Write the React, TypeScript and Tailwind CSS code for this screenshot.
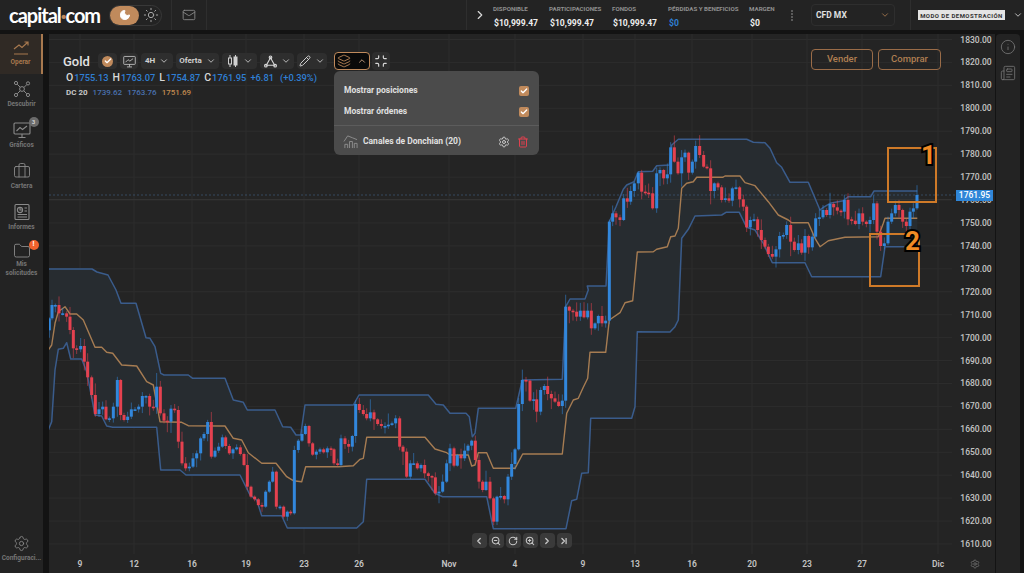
import {
    Briefcase,
    Check,
    ChevronDown,
    ChevronLast,
    ChevronLeft,
    ChevronRight,
    ChevronUp,
    Folder,
    Info,
    Layers,
    Mail,
    Minimize,
    Moon,
    Newspaper,
    Pencil,
    RotateCw,
    Settings,
    Sun,
    Trash2,
    ZoomIn,
    ZoomOut,
} from 'lucide-react';
import type { ReactNode } from 'react';

type Pt = [number, number];

// points read off 3x crops: [x, y] in crop space, origin is the crop's corner
const crop = (pts: Pt[], ox: number, oy: number): Pt[] => pts.map(([x, y]) => [ox + x / 3, oy + y / 3]);

const closes: Pt[] = [
    ...crop(
        [[28, 85], [36, 45], [46, 45], [57, 70], [68, 70], [80, 80], [90, 120], [100, 175], [110, 178], [122, 168], [133, 215], [143, 262], [155, 315], [166, 372], [177, 358], [188, 350], [198, 388], [208, 385], [220, 350], [232, 270], [242, 375], [252, 390], [263, 380], [274, 358], [285, 358], [296, 350], [307, 318], [318, 318], [329, 350], [340, 352], [350, 290], [361, 370], [372, 392], [382, 395], [393, 356], [404, 360], [415, 455], [426, 520], [437, 535], [448, 530], [459, 505], [470, 490], [482, 445], [492, 432], [503, 396], [514, 500], [525, 482], [536, 470], [547, 442], [557, 468], [568, 490], [579, 478], [590, 472], [601, 492], [612, 525], [622, 590], [633, 620], [644, 628], [655, 645], [666, 650], [677, 605], [688, 575], [698, 545], [709, 650], [720, 650], [731, 680], [742, 665], [752, 670], [763, 480], [775, 452], [786, 432], [796, 408], [807, 460], [818, 494], [829, 485], [840, 478], [851, 487], [862, 475], [873, 478], [882, 520], [893, 525]],
        40,
        290,
    ),
    ...crop(
        [[3, 445], [15, 462], [26, 470], [37, 438], [47, 342], [58, 360], [70, 372], [80, 385], [91, 367], [102, 388], [113, 402], [124, 408], [135, 408], [145, 404], [156, 400], [167, 385], [179, 470], [189, 485], [200, 560], [211, 520], [221, 520], [232, 535], [243, 525], [254, 550], [265, 558], [276, 562], [286, 610], [297, 605], [308, 575], [320, 520], [330, 475], [342, 527], [352, 495], [363, 505], [374, 482], [384, 467], [395, 452], [406, 510], [417, 575], [428, 600], [438, 575], [450, 625], [461, 695], [471, 620], [482, 618], [493, 628], [504, 560], [515, 522], [525, 478], [536, 342], [547, 270], [558, 272], [570, 332], [581, 328], [590, 365], [602, 300], [613, 288], [623, 312], [634, 325], [645, 335], [656, 348], [667, 332], [677, 50], [688, 62], [699, 65], [710, 80], [721, 62], [732, 82], [743, 62], [754, 115], [765, 100], [775, 78], [786, 100], [797, 92]],
        340,
        290,
    ),
    ...crop(
        [[148, 275], [158, 250], [168, 262], [180, 270], [191, 205], [202, 215], [212, 183], [223, 160], [235, 128], [245, 185], [256, 188], [266, 190], [278, 235], [290, 130], [300, 120], [311, 145], [322, 133], [332, 52], [343, 95], [354, 130], [365, 82], [375, 68], [386, 128], [397, 95], [407, 48], [419, 75], [431, 110], [441, 115], [452, 183], [463, 160], [474, 172], [485, 210], [496, 205], [507, 212], [517, 175], [528, 172], [539, 208], [550, 230], [560, 292], [571, 270], [582, 268], [593, 300], [604, 330], [615, 350], [625, 372], [637, 380], [648, 358], [659, 318], [670, 315], [680, 285], [692, 335], [703, 360], [715, 340]],
        560,
        130,
    ),
    ...crop(
        [[65, 368], [75, 318], [86, 352], [97, 320], [107, 265], [118, 262], [129, 240], [140, 255], [150, 222], [161, 232], [172, 242], [183, 245], [193, 210], [204, 268], [215, 272], [226, 282], [237, 250], [248, 275], [259, 282], [270, 270], [281, 220], [291, 305], [302, 348], [313, 340], [324, 275], [335, 250], [346, 225], [357, 240], [368, 275], [379, 288], [390, 245], [400, 235], [411, 195]],
        780,
        130,
    ),
];

const upper: Pt[] = [
    [49, 269],
    [92, 269],
    [97, 272],
    [108, 275],
    ...crop([[228, 0], [243, 40], [288, 40], [318, 143], [330, 145], [345, 170], [362, 250], [372, 255], [445, 255], [458, 265], [555, 265], [580, 330], [610, 337], [622, 360], [705, 360], [728, 410], [752, 412], [768, 435], [782, 435], [795, 345], [895, 345]], 40, 290),
    ...crop([[40, 345], [57, 315], [265, 315], [288, 343], [310, 345], [330, 370], [378, 370], [388, 380], [397, 440], [405, 430], [415, 355], [527, 355], [547, 270], [667, 268], [677, 50], [690, 27], [735, 27], [745, 0]], 340, 290),
    ...crop([[82, 468], [138, 468], [148, 275], [168, 230], [190, 178], [200, 165], [222, 155], [235, 125], [278, 124], [290, 107], [328, 105], [335, 45], [355, 28], [560, 28], [580, 37], [615, 38], [630, 55], [650, 98], [665, 112], [690, 157]], 560, 130),
    ...crop([[85, 157], [120, 240], [130, 232], [150, 220], [190, 212], [205, 200], [272, 200], [282, 183], [412, 183]], 780, 130),
];

const lower: Pt[] = [
    ...crop([[25, 420], [35, 395], [45, 240], [55, 178], [70, 175], [80, 158], [92, 207], [125, 207], [140, 245], [165, 375], [185, 378], [200, 408], [218, 412], [350, 412], [362, 540], [420, 540], [438, 555], [600, 555], [630, 615], [650, 630], [665, 677], [725, 677], [742, 714], [895, 714]], 40, 290),
    ...crop([[50, 714], [70, 695], [80, 568], [255, 568], [285, 610], [308, 620], [440, 620], [460, 716], [678, 716], [695, 632], [710, 628], [725, 550], [745, 548], [752, 385], [875, 385], [885, 350], [892, 125]], 340, 290),
    ...crop([[330, 606], [345, 590], [355, 570], [365, 325], [385, 298], [405, 258], [485, 255], [498, 247], [538, 247], [560, 292], [585, 300], [610, 340], [637, 398]], 560, 130),
    ...crop([[75, 398], [95, 440], [302, 440], [315, 350], [390, 350], [412, 350]], 780, 130),
];

const middle: Pt[] = [
    ...crop([[25, 180], [35, 165], [45, 100], [55, 65], [75, 50], [90, 72], [110, 72], [130, 90], [165, 172], [185, 172], [200, 187], [218, 190], [245, 225], [290, 228], [320, 275], [340, 285], [360, 395], [425, 397], [445, 407], [555, 408], [580, 445], [605, 450], [625, 488], [665, 520], [708, 520], [740, 560], [760, 572], [785, 575], [797, 530], [895, 530]], 40, 290),
    ...crop([[40, 527], [60, 508], [70, 505], [80, 442], [255, 442], [285, 477], [320, 488], [330, 495], [385, 495], [395, 528], [405, 525], [415, 488], [440, 488], [460, 535], [525, 535], [548, 492], [667, 492], [680, 370], [700, 330], [715, 325], [730, 292], [743, 265], [750, 187], [797, 187]], 340, 290),
    ...crop([[148, 570], [180, 548], [195, 518], [218, 512], [232, 366], [280, 365], [290, 358], [322, 350], [332, 320], [345, 318], [355, 295], [365, 175], [380, 160], [400, 155], [410, 142], [488, 142], [495, 138], [540, 138], [555, 158], [585, 167], [625, 215], [655, 255], [685, 270], [695, 278]], 560, 130),
    ...crop([[85, 278], [105, 325], [120, 350], [145, 332], [195, 322], [295, 320], [310, 280], [315, 265], [412, 265]], 780, 130),
];

const toPath = (pts: Pt[]) => pts.map(([x, y]) => `${x.toFixed(1)},${y.toFixed(1)}`).join(' ');

// stable pseudo random so the wicks don't change between renders
const noise = (i: number) => {
    const v = Math.sin(i * 12.9898) * 43758.5453;
    return v - Math.floor(v);
};

const priceLevels = Array.from({ length: 23 }, (_, i) => 1830 - i * 10);
const priceY = (price: number) => 39.5 + (1830 - price) * 2.293;

const dateTicks: [string, number][] = [
    ['9', 80],
    ['12', 134],
    ['16', 192],
    ['19', 246],
    ['23', 304],
    ['26', 359],
    ['Nov', 449],
    ['4', 515],
    ['9', 583],
    ['13', 635],
    ['16', 692],
    ['20', 752],
    ['23', 807],
    ['27', 862],
    ['Dic', 938],
];

function Chart() {
    return (
        <svg className="absolute inset-0 h-full w-full" viewBox="49 34 946 539">
            {priceLevels.map((p) => (
                <line key={p} x1="49" x2="952" y1={priceY(p)} y2={priceY(p)} stroke="#2d2d2d" strokeWidth="1" />
            ))}
            {dateTicks.map(([, x]) => (
                <line key={x} x1={x} x2={x} y1="34" y2="554" stroke="#2d2d2d" strokeWidth="1" />
            ))}
            <polygon points={toPath([...upper, ...[...lower].reverse()])} fill="#272c30" />
            <line x1="49" x2="956" y1="195" y2="195" stroke="#3d5a78" strokeWidth="0.7" strokeDasharray="2 2" />
            <line x1="49" x2="952" y1="199.5" y2="199.5" stroke="#383838" strokeWidth="0.7" />
            <polyline points={toPath(upper)} fill="none" stroke="#3a5c8c" strokeWidth="1.5" strokeLinejoin="round" />
            <polyline points={toPath(lower)} fill="none" stroke="#3a5c8c" strokeWidth="1.5" strokeLinejoin="round" />
            <polyline points={toPath(middle)} fill="none" stroke="#a67c52" strokeWidth="1.4" strokeLinejoin="round" />
            {closes.map(([x, close], i) => {
                const open = i === 0 ? close + 12 : closes[i - 1][1];
                const up = close <= open;
                const color = up ? '#3287dc' : '#e5414f';
                const top = Math.min(open, close);
                const bottom = Math.max(open, close);
                const wickUp = 1 + noise(i) * noise(i + 7) * 14;
                const wickDown = 1 + noise(i + 3) * noise(i + 11) * 14;
                return (
                    <g key={i}>
                        <line x1={x} x2={x} y1={top - wickUp} y2={bottom + wickDown} stroke={color} strokeWidth="1" opacity="0.55" />
                        <rect x={x - 1.5} y={top} width="3" height={Math.max(bottom - top, 1.6)} fill={color} />
                    </g>
                );
            })}
            {priceLevels.map((p) => (
                <text key={p} x="976" y={priceY(p) + 3} textAnchor="middle" fill="#c4c4c4" fontSize="8.5" fontWeight="500">
                    {p}.00
                </text>
            ))}
            {dateTicks.map(([label, x]) => (
                <text key={x} x={x} y="567" textAnchor="middle" fill="#c4c4c4" fontSize="8.5" fontWeight="600">
                    {label}
                </text>
            ))}
        </svg>
    );
}

function MonitorChart({ stroke, className }: { stroke: string; className: string }) {
    return (
        <svg className={className} viewBox="0 0 18 18" fill="none" stroke={stroke} strokeWidth="1.1">
            <rect x="1" y="2" width="16" height="11" rx="1" />
            <path d="M3.5 10 7 6.5l2.5 2L14 5M9 13v3M5.5 16.5h7" />
        </svg>
    );
}

function SideItem({ label, icon, active, badge }: { label: ReactNode; icon: ReactNode; active?: boolean; badge?: ReactNode }) {
    return (
        <div
            className={`relative flex shrink-0 flex-col items-center justify-center gap-0.5 text-center text-[6.5px] leading-[9px] font-bold ${
                active ? 'h-[39.5px] border-r-2 border-[#a8794f] bg-[#302a25] text-[#a8794f]' : 'h-[41px] text-[#757575]'
            }`}
        >
            <div className="relative">
                {icon}
                {badge}
            </div>
            <span>{label}</span>
        </div>
    );
}

function Stat({ label, value, blue }: { label: string; value: string; blue?: boolean }) {
    return (
        <div className="flex flex-col gap-[5px]">
            <span className="text-[6.2px] leading-[7px] font-bold whitespace-nowrap text-[#8f8f8f]">{label}</span>
            <span className={`pl-px text-[8.6px] leading-[10px] font-bold ${blue ? 'text-[#2f7fd4]' : 'text-[#eeeeee]'}`}>{value}</span>
        </div>
    );
}

function ToolButton({ children, className }: { children: ReactNode; className: string }) {
    return <div className={`flex h-4 items-center justify-center gap-1 rounded-sm bg-[#2e2e2e] text-[8px] font-bold text-[#d0d0d0] ${className}`}>{children}</div>;
}

function NavButton({ children }: { children: ReactNode }) {
    return <div className="flex h-[15px] w-[14.5px] items-center justify-center rounded-sm bg-[#3a3a3a] text-[#c8c8c8]">{children}</div>;
}

function Check2() {
    return (
        <div className="flex size-2.5 items-center justify-center rounded-[2px] bg-[#c08a5c]">
            <Check className="size-2 text-white" strokeWidth={4} />
        </div>
    );
}

export default function App() {
    const small = 'size-2.5';
    return (
        <div className="flex h-[573px] w-[1024px] flex-col overflow-hidden bg-[#131313] [font-family:Roboto,sans-serif]">
            <header className="flex h-[30px] shrink-0 items-center bg-[#232323]">
                <div className="flex h-full w-[172px] items-center border-r border-[#2e2e2e] pl-[9px]">
                    <span className="w-[100px] text-[20px] leading-none font-bold tracking-[-1px] text-white [font-family:Lato,sans-serif]">
                        capital<span className="font-black text-[#c08a5c]">·</span>com
                    </span>
                    <div className="flex h-[21px] w-[53px] items-center rounded-full border border-[#383838]">
                        <div className="flex h-full w-[29px] items-center justify-center rounded-full bg-[#c08a5c]">
                            <Moon className="size-3 fill-white text-white" />
                        </div>
                        <Sun className="ml-1 size-4 text-[#a5a5a5]" strokeWidth={1.5} />
                    </div>
                </div>
                <div className="flex h-full w-[35px] items-center justify-center border-r border-[#2e2e2e]">
                    <Mail className="size-3.5 text-[#8a8a8a]" strokeWidth={1.5} />
                </div>
                <div className="flex h-full w-[260px] border-r border-[#2e2e2e]" />
                <div className="flex w-[26px] justify-center">
                    <ChevronRight className="size-3.5 text-[#d8d8d8]" />
                </div>
                <div className="flex w-[318px] items-center pt-[4px]">
                    <div className="w-[56px]"><Stat label="DISPONIBLE" value="$10,999.47" /></div>
                    <div className="w-[63px]"><Stat label="PARTICIPACIONES" value="$10,999.47" /></div>
                    <div className="w-[56px]"><Stat label="FONDOS" value="$10,999.47" /></div>
                    <div className="w-[81px]"><Stat label="PÉRDIDAS Y BENEFICIOS" value="$0" blue /></div>
                    <div className="w-[42px]"><Stat label="MARGEN" value="$0" /></div>
                    <div className="-mt-1 flex flex-col gap-[1px]">
                        <span className="size-[2px] rounded-full bg-[#6e6e6e]" />
                        <span className="size-[2px] rounded-full bg-[#6e6e6e]" />
                        <span className="size-[2px] rounded-full bg-[#6e6e6e]" />
                        <span className="size-[2px] rounded-full bg-[#6e6e6e]" />
                    </div>
                </div>
                <div className="flex h-[22px] w-[84px] items-center justify-between rounded-sm border border-[#2e2e2e] pr-1 pl-[4px] text-[8.5px] font-bold text-[#e0e0e0]">
                    CFD MX
                    <ChevronDown className="size-2.5 text-[#a8794f]" />
                </div>
                <div className="ml-[15px] flex h-full flex-1 items-center border-l border-[#2e2e2e] pl-[7px]">
                    <span className="flex h-[10px] w-[87px] items-center justify-center bg-[#e4e4e4] text-[6px] font-bold tracking-[0.45px] whitespace-nowrap text-[#333333]">
                        MODO DE DEMOSTRACIÓN
                    </span>
                    <ChevronDown className="ml-2 size-2.5 text-[#d8d8d8]" />
                </div>
            </header>

            <div className="mt-1 flex min-h-0 flex-1">
                <aside className="flex w-[43px] shrink-0 flex-col bg-[#232323]">
                    <SideItem
                        active
                        label="Operar"
                        icon={
                            <svg className="h-[16px] w-[18px]" viewBox="0 0 18 16" fill="none" stroke="#a8794f" strokeWidth="1.2">
                                <path d="M2 9 7 5l3 2.5L16 2M12.5 2H16v3.5M2 14h14" />
                            </svg>
                        }
                    />
                    <SideItem
                        label="Descubrir"
                        icon={
                            <svg className="size-[18px]" viewBox="0 0 18 18" fill="none" stroke="#8a8a8a" strokeWidth="1">
                                <circle cx="9" cy="9" r="2.4" />
                                <circle cx="3" cy="3" r="1.6" />
                                <circle cx="15" cy="3.4" r="1.6" />
                                <circle cx="3" cy="15" r="1.6" />
                                <circle cx="15" cy="15" r="1.6" />
                                <path d="m4.2 4.2 3 3M13.8 4.6l-3 3M4.2 13.8l3-3M13.8 13.8l-3-3" />
                            </svg>
                        }
                    />
                    <SideItem
                        label="Gráficos"
                        icon={<MonitorChart stroke="#8a8a8a" className="size-[18px]" />}
                        badge={<span className="absolute -top-1 -right-2 flex size-2.5 items-center justify-center rounded-full bg-[#6b6b6b] text-[6px] text-[#d0d0d0]">3</span>}
                    />
                    <SideItem label="Cartera" icon={<Briefcase className="size-[18px] text-[#8a8a8a]" strokeWidth={1.2} />} />
                    <SideItem
                        label="Informes"
                        icon={
                            <svg className="size-[18px]" viewBox="0 0 18 18" fill="none" stroke="#8a8a8a" strokeWidth="1.1">
                                <rect x="2" y="1.5" width="14" height="15" rx="1" />
                                <circle cx="7" cy="7" r="2.6" />
                                <path d="M7 4.4V7h2.6M11.5 5h2.5M11.5 8h2.5M4.5 11.5h9.5M4.5 14h9.5" />
                            </svg>
                        }
                    />
                    <div className="relative flex h-[40px] shrink-0 flex-col items-center pt-1 text-center text-[6.5px] leading-[9px] font-bold text-[#757575]">
                        <div className="relative">
                            <Folder className="size-[18px] text-[#8a8a8a]" strokeWidth={1.2} />
                            <span className="absolute -top-0.5 -right-2 flex size-2.5 items-center justify-center rounded-full bg-[#f0622d] text-[7px] text-white">!</span>
                        </div>
                        <span>
                            Mis
                            <br />
                            solicitudes
                        </span>
                    </div>
                    <div className="mt-auto flex h-[38px] flex-col items-center gap-0.5 text-[6.5px] leading-[9px] font-bold text-[#757575]">
                        <Settings className="size-[17px] text-[#8a8a8a]" strokeWidth={1.2} />
                        <span>Configuraci...</span>
                    </div>
                </aside>

                <div className="w-[6px] shrink-0" />

                <main className="relative flex-1 overflow-hidden bg-[#242424]">
                    <Chart />

                    <div className="absolute top-[18px] left-[14px] flex items-center">
                        <span className="w-[35px] text-[13px] leading-none font-medium text-[#e2e2e2]">Gold</span>
                        <div className="flex items-center gap-[3px]">
                            <ToolButton className="w-[19px]">
                                <span className="flex size-[11px] items-center justify-center rounded-full bg-[#c08a5c]">
                                    <Check className="size-2 text-white" strokeWidth={4} />
                                </span>
                            </ToolButton>
                            <ToolButton className="w-[18px]">
                                <MonitorChart stroke="#d0d0d0" className="size-[13px]" />
                            </ToolButton>
                            <ToolButton className="w-[32px]">
                                4H <ChevronDown className={small} />
                            </ToolButton>
                            <ToolButton className="w-[43px]">
                                Oferta <ChevronDown className={small} />
                            </ToolButton>
                            <ToolButton className="w-[35px]">
                                <svg className="size-3" viewBox="0 0 12 12" fill="#d0d0d0" stroke="#d0d0d0">
                                    <path d="M3 0v12M8.5 0v12" strokeWidth="1" />
                                    <rect x="1.5" y="3" width="3" height="6" fill="#2e2e2e" />
                                    <rect x="7" y="2" width="3" height="8" />
                                </svg>
                                <ChevronDown className={small} />
                            </ToolButton>
                            <ToolButton className="w-[34px]">
                                <svg className="size-[13px]" viewBox="0 0 14 14" fill="none" stroke="#d8d8d8" strokeWidth="1.2">
                                    <path d="M7 3 2.5 11h9z" />
                                    <circle cx="7" cy="2.5" r="1.4" />
                                    <circle cx="2" cy="11.5" r="1.4" />
                                    <circle cx="12" cy="11.5" r="1.4" />
                                </svg>
                                <ChevronDown className={small} />
                            </ToolButton>
                            <ToolButton className="w-[30px]">
                                <Pencil className="size-3" />
                                <ChevronDown className={small} />
                            </ToolButton>
                            <div className="ml-1 flex h-[18px] w-[36px] items-center justify-center gap-1.5 rounded-sm border border-[#c08a5c] bg-[#0a0a0a]">
                                <Layers className="size-3.5 text-[#c08a5c]" strokeWidth={1.5} />
                                <ChevronUp className="size-2.5 text-[#d8b090]" />
                            </div>
                            <div className="-ml-px flex size-[18px] items-center justify-center rounded-sm bg-[#2e2e2e]">
                                <Minimize className="size-3.5 text-[#d8d8d8]" />
                            </div>
                        </div>
                    </div>

                    <div className="absolute top-[38px] left-[17px] flex gap-1 text-[9.3px] leading-3 font-medium text-[#2f7fd4]">
                        <span>
                            <b className="mr-px text-[10.5px] font-medium text-[#d8d8d8]">O</b>1755.13
                        </span>
                        <span>
                            <b className="mr-px text-[10.5px] font-medium text-[#d8d8d8]">H</b>1763.07
                        </span>
                        <span>
                            <b className="mr-px text-[10.5px] font-medium text-[#d8d8d8]">L</b>1754.87
                        </span>
                        <span>
                            <b className="mr-px text-[10.5px] font-medium text-[#d8d8d8]">C</b>1761.95
                        </span>
                        <span>+6.81</span>
                        <span className="ml-0.5">(+0.39%)</span>
                    </div>

                    <div className="absolute top-[54px] left-[17px] flex gap-[5px] text-[8px] leading-[10px] font-medium">
                        <span className="font-bold text-[#c8c8c8]">DC 20</span>
                        <span className="text-[#4a72b0]">1739.62</span>
                        <span className="text-[#4a72b0]">1763.76</span>
                        <span className="text-[#c08a50]">1751.69</span>
                    </div>

                    <div className="absolute top-[37px] left-[285px] w-[205px] rounded-md bg-[#4b4b4b] text-[8.5px] font-bold text-[#e0e0e0]">
                        <div className="flex h-[55px] flex-col justify-center gap-[11px] border-b border-[#5c5c5c] px-[10px] pt-[6px]">
                            <div className="flex h-2.5 items-center justify-between">
                                Mostrar posiciones
                                <Check2 />
                            </div>
                            <div className="flex h-2.5 items-center justify-between">
                                Mostrar órdenes
                                <Check2 />
                            </div>
                        </div>
                        <div className="flex h-[29px] items-center px-[9px] pt-0.5">
                            <svg className="mr-[5px] size-[15px]" viewBox="0 0 16 16" fill="none" stroke="#8f8f8f" strokeWidth="1">
                                <path d="M1 8 5 2l5 2 5 2M2 15V11h3v4M7 15V8h3v7M12 15v-5h3v5" />
                            </svg>
                            Canales de Donchian (20)
                            <Settings className="mr-[7px] ml-auto size-3 text-[#c8c8c8]" />
                            <Trash2 className="mr-[1px] size-3 text-[#e0414f]" />
                        </div>
                    </div>

                    <div className="absolute top-[15px] left-[762px] flex gap-[5px] text-[9.5px] font-medium text-[#b07f52]">
                        <div className="flex h-[21px] w-[62px] items-center justify-center rounded-[4px] border border-[#9a6c48]">Vender</div>
                        <div className="flex h-[21px] w-[63px] items-center justify-center rounded-[4px] border border-[#9a6c48]">Comprar</div>
                    </div>

                    <div className="absolute top-[156px] left-[907px] flex h-[11px] w-[37px] items-center justify-center bg-[#2f86d8] text-[8.5px] font-medium text-white">
                        1761.95
                    </div>

                    <div className="absolute top-[113px] left-[838px] h-[56px] w-[50px] border-2 border-[#cf7a28]" />
                    <div className="absolute top-[199px] left-[820px] h-[54px] w-[51px] border-2 border-[#cf7a28]" />
                    <span className="absolute top-[106px] left-[872px] text-[26px] leading-[30px] font-bold text-[#f08a24] [-webkit-text-stroke:4px_#000] [paint-order:stroke_fill]">1</span>
                    <span className="absolute top-[192px] left-[856px] text-[26px] leading-[30px] font-bold text-[#f08a24] [-webkit-text-stroke:4px_#000] [paint-order:stroke_fill]">2</span>

                    <div className="absolute top-[499px] left-[423px] flex gap-[2.5px]">
                        <NavButton><ChevronLeft className="size-2.5" strokeWidth={3} /></NavButton>
                        <NavButton><ZoomOut className="size-2.5" strokeWidth={2.5} /></NavButton>
                        <NavButton><RotateCw className="size-2.5" strokeWidth={2.5} /></NavButton>
                        <NavButton><ZoomIn className="size-2.5" strokeWidth={2.5} /></NavButton>
                        <NavButton><ChevronRight className="size-2.5" strokeWidth={3} /></NavButton>
                        <NavButton><ChevronLast className="size-2.5" strokeWidth={3} /></NavButton>
                    </div>

                    <Settings className="absolute top-[525px] left-[921px] size-2.5 text-[#6e6e6e]" />
                </main>

                <aside className="ml-px flex w-[24px] shrink-0 flex-col items-center gap-[10px] rounded-t bg-[#232323] pt-[5px]">
                    <Info className="size-[16px] text-[#7a7a7a]" strokeWidth={1.2} />
                    <Newspaper className="size-[16px] text-[#7a7a7a]" strokeWidth={1.2} />
                </aside>
                <div className="w-1 shrink-0" />
            </div>
        </div>
    );
}
